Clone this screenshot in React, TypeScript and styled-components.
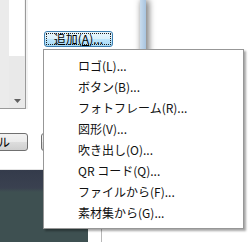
import React from "react";
import styled, { createGlobalStyle } from "styled-components";

const GlobalStyle = createGlobalStyle`
  html, body {
    margin: 0;
    padding: 0;
    background: #ffffff;
  }
  body {
    font-family: "Noto Sans CJK JP", "Noto Sans", sans-serif;
  }
`;

const Screen = styled.div`
  position: relative;
  width: 250px;
  height: 242px;
  overflow: hidden;
  background: #ffffff;
  display: flex;
  flex-direction: column;
`;

const Upper = styled.div`
  display: flex;
  height: 170px;
`;

const Client = styled.div`
  width: 140px;
  background: #ffffff;
  display: flex;
  flex-direction: column;
  border-bottom: 1px solid #e4e4e4;
`;

const Frame = styled.div`
  width: 6px;
  background: linear-gradient(to right, #c9dcee, #a8c4df);
  box-shadow: 2px 0 7px rgba(0, 0, 0, 0.7);
`;

const TopRow = styled.div`
  display: flex;
  height: 121px;
`;

const ListBox = styled.div`
  width: 80px;
  height: 108px;
  margin-left: -55px;
  display: flex;
  background: #ebebeb;
  border-right: 1px solid #9a9a9a;
  border-bottom: 1px solid #9a9a9a;
  box-shadow: 2px 0 0 #f2f2f2;
`;

const ListItems = styled.div`
  flex: 1;
`;

const ScrollBar = styled.div`
  width: 16px;
  display: flex;
  flex-direction: column;
  background: #e9e9e9;
`;

const Thumb = styled.div`
  height: 56px;
  background: #ffffff;
  border-right: 1px solid #f4f4f4;
`;

const Track = styled.div`
  flex: 1;
`;

const ArrowButton = styled.div`
  height: 15px;
  display: flex;
  align-items: center;
  justify-content: center;
`;

const SideButtons = styled.div`
  margin-left: 17px;
  padding-top: 31px;
  display: flex;
  flex-direction: column;
`;

const AddButton = styled.div`
  margin-left: 1px;
  width: 69px;
  height: 16px;
  box-sizing: border-box;
  border: 1px solid #3c7fb1;
  border-radius: 3px;
  background: linear-gradient(to bottom, #eaf6fd 0%, #d9f0fc 50%, #bee6fd 51%, #a7d9f5 100%);
  padding: 1px;
  display: flex;
`;

const FocusRect = styled.div`
  flex: 1;
  border: 1px dotted #202020;
  display: flex;
  align-items: center;
  justify-content: center;
  font-size: 12px;
  line-height: 12px;
  color: #000000;
  white-space: nowrap;
`;

const Mnemonic = styled.span`
  text-decoration: underline;
`;

const SideButton = styled.div<{ $gap: number }>`
  margin-top: ${({ $gap }) => $gap}px;
  width: 80px;
  height: 18px;
  box-sizing: border-box;
  border: 1px solid #707070;
  border-radius: 3px;
  background: linear-gradient(to bottom, #f2f2f2 0%, #ebebeb 50%, #dddddd 51%, #cfcfcf 100%);
`;

const BottomRow = styled.div`
  display: flex;
  margin-top: 12px;
`;

const DialogButton = styled.div<{ $offset: number }>`
  margin-left: ${({ $offset }) => $offset}px;
  width: 80px;
  height: 18px;
  flex-shrink: 0;
  box-sizing: border-box;
  padding-right: 16px;
  border: 1px solid #707070;
  border-radius: 3px;
  background: linear-gradient(to bottom, #f2f2f2 0%, #ebebeb 50%, #dddddd 51%, #cfcfcf 100%);
  display: flex;
  align-items: center;
  justify-content: center;
  font-size: 12px;
  line-height: 12px;
  color: #000000;
  white-space: nowrap;
`;

const Lower = styled.div`
  flex: 1;
  display: flex;
`;

const DarkPanel = styled.div`
  width: 88px;
  background: linear-gradient(to bottom, #343b4b 0px, #3a4150 18px, #3e5051 22px, #3e5051 100%);
`;

const LightPanel = styled.div`
  width: 13px;
  background: #ffffff;
  border-right: 1px solid #b8b8b8;
`;

const Menu = styled.div`
  position: absolute;
  left: 43px;
  top: 49px;
  width: 201px;
  box-sizing: border-box;
  border: 1px solid #979797;
  background: #ffffff;
  padding: 5px 2px 5px 2px;
  box-shadow: 2px 2px 2px rgba(0, 0, 0, 0.35);
  display: flex;
  flex-direction: column;
`;

const MenuItem = styled.div`
  height: 21px;
  padding-left: 32px;
  display: flex;
  align-items: center;
  font-size: 12px;
  color: #111111;
  white-space: nowrap;
`;

const items = [
  "ロゴ(L)...",
  "ボタン(B)...",
  "フォトフレーム(R)...",
  "図形(V)...",
  "吹き出し(O)...",
  "QR コード(Q)...",
  "ファイルから(F)...",
  "素材集から(G)...",
];

export default function App() {
  return (
    <>
      <GlobalStyle />
      <Screen>
        <Upper>
          <Client>
            <TopRow>
              <ListBox>
                <ListItems />
                <ScrollBar>
                  <Thumb />
                  <Track />
                  <ArrowButton>
                    <svg width="7" height="4" viewBox="0 0 7 4">
                      <path d="M0 0 H7 L3.5 4 Z" fill="#606060" />
                    </svg>
                  </ArrowButton>
                </ScrollBar>
              </ListBox>
              <SideButtons>
                <AddButton>
                  <FocusRect>
                    追加(<Mnemonic>A</Mnemonic>)...
                  </FocusRect>
                </AddButton>
                <SideButton $gap={16} />
                <SideButton $gap={11} />
              </SideButtons>
            </TopRow>
            <BottomRow>
              <DialogButton $offset={-52}>キャンセル</DialogButton>
              <DialogButton $offset={13} />
            </BottomRow>
          </Client>
          <Frame />
        </Upper>
        <Lower>
          <DarkPanel />
          <LightPanel />
        </Lower>
        <Menu>
          {items.map((label) => (
            <MenuItem key={label}>{label}</MenuItem>
          ))}
        </Menu>
      </Screen>
    </>
  );
}
